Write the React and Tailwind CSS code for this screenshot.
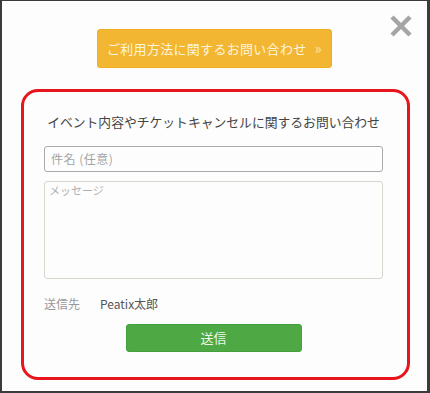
import React from "react";

export default function App() {
  const jp = { fontFamily: '"Noto Sans CJK JP", "Noto Sans", sans-serif' };
  return (
    <div className="w-[430px] h-[393px] bg-[#3b3b3b] pl-[2px] pt-[1px] pr-[3px] pb-[2px]" style={jp}>
      <div className="relative w-full h-full bg-[#fcfdfc] flex flex-col">
        <svg className="absolute left-[387px] top-[13px]" width="24" height="24" viewBox="0 0 24 24">
          <path d="M3 3 L21 21 M21 3 L3 21" stroke="#a5a5a5" strokeWidth="4.5" strokeLinecap="butt" />
        </svg>
        <div className="flex justify-center pt-[28px]">
          <div className="w-[235px] h-[39px] rounded-[3px] bg-[#f2b633] border border-[#f0ae22] flex items-center justify-center text-[13px] text-[#fdf4de] tracking-[0.3px]">
            ご利用方法に関するお問い合わせ<span className="ml-[8px] text-[15px] text-[#fbe3a8]">»</span>
          </div>
        </div>
        <div className="ml-[19px] mt-[21px] w-[389px] h-[291px] border-[3.5px] border-[#e8151d] rounded-[17px] flex flex-col items-center pr-[4px]">
          <div className="pt-[21px] text-[12.8px] leading-[18px] text-[#444] text-center">
            イベント内容やチケットキャンセルに関するお問い合わせ
          </div>
          <div className="mt-[15px] w-[339px] h-[26px] border border-[#aaaaaa] rounded-[3px] bg-[#fcfdfc] flex items-center pl-[6px] text-[12px] tracking-[0.5px] text-[#a5a5a5]">
            件名 (任意)
          </div>
          <div className="mt-[9px] w-[339px] h-[98px] border border-[#d6d6cf] rounded-[3px] bg-[#fcfdfc] pl-[4px] pt-[1px] text-[11px] leading-[14px] text-[#b0b0b0]">
            メッセージ
          </div>
          <div className="mt-[17px] w-[339px] h-[16px] flex items-center text-[12px]">
            <span className="text-[#999]">送信先</span>
            <span className="ml-[20px] text-[#555]">Peatix太郎</span>
          </div>
          <div className="mt-[12px] w-[176px] h-[28px] rounded-[3px] bg-[#4ea945] border border-[#44a03c] flex items-center justify-center text-[13px] text-[#eef7ec]">
            送信
          </div>
        </div>
      </div>
    </div>
  );
}
